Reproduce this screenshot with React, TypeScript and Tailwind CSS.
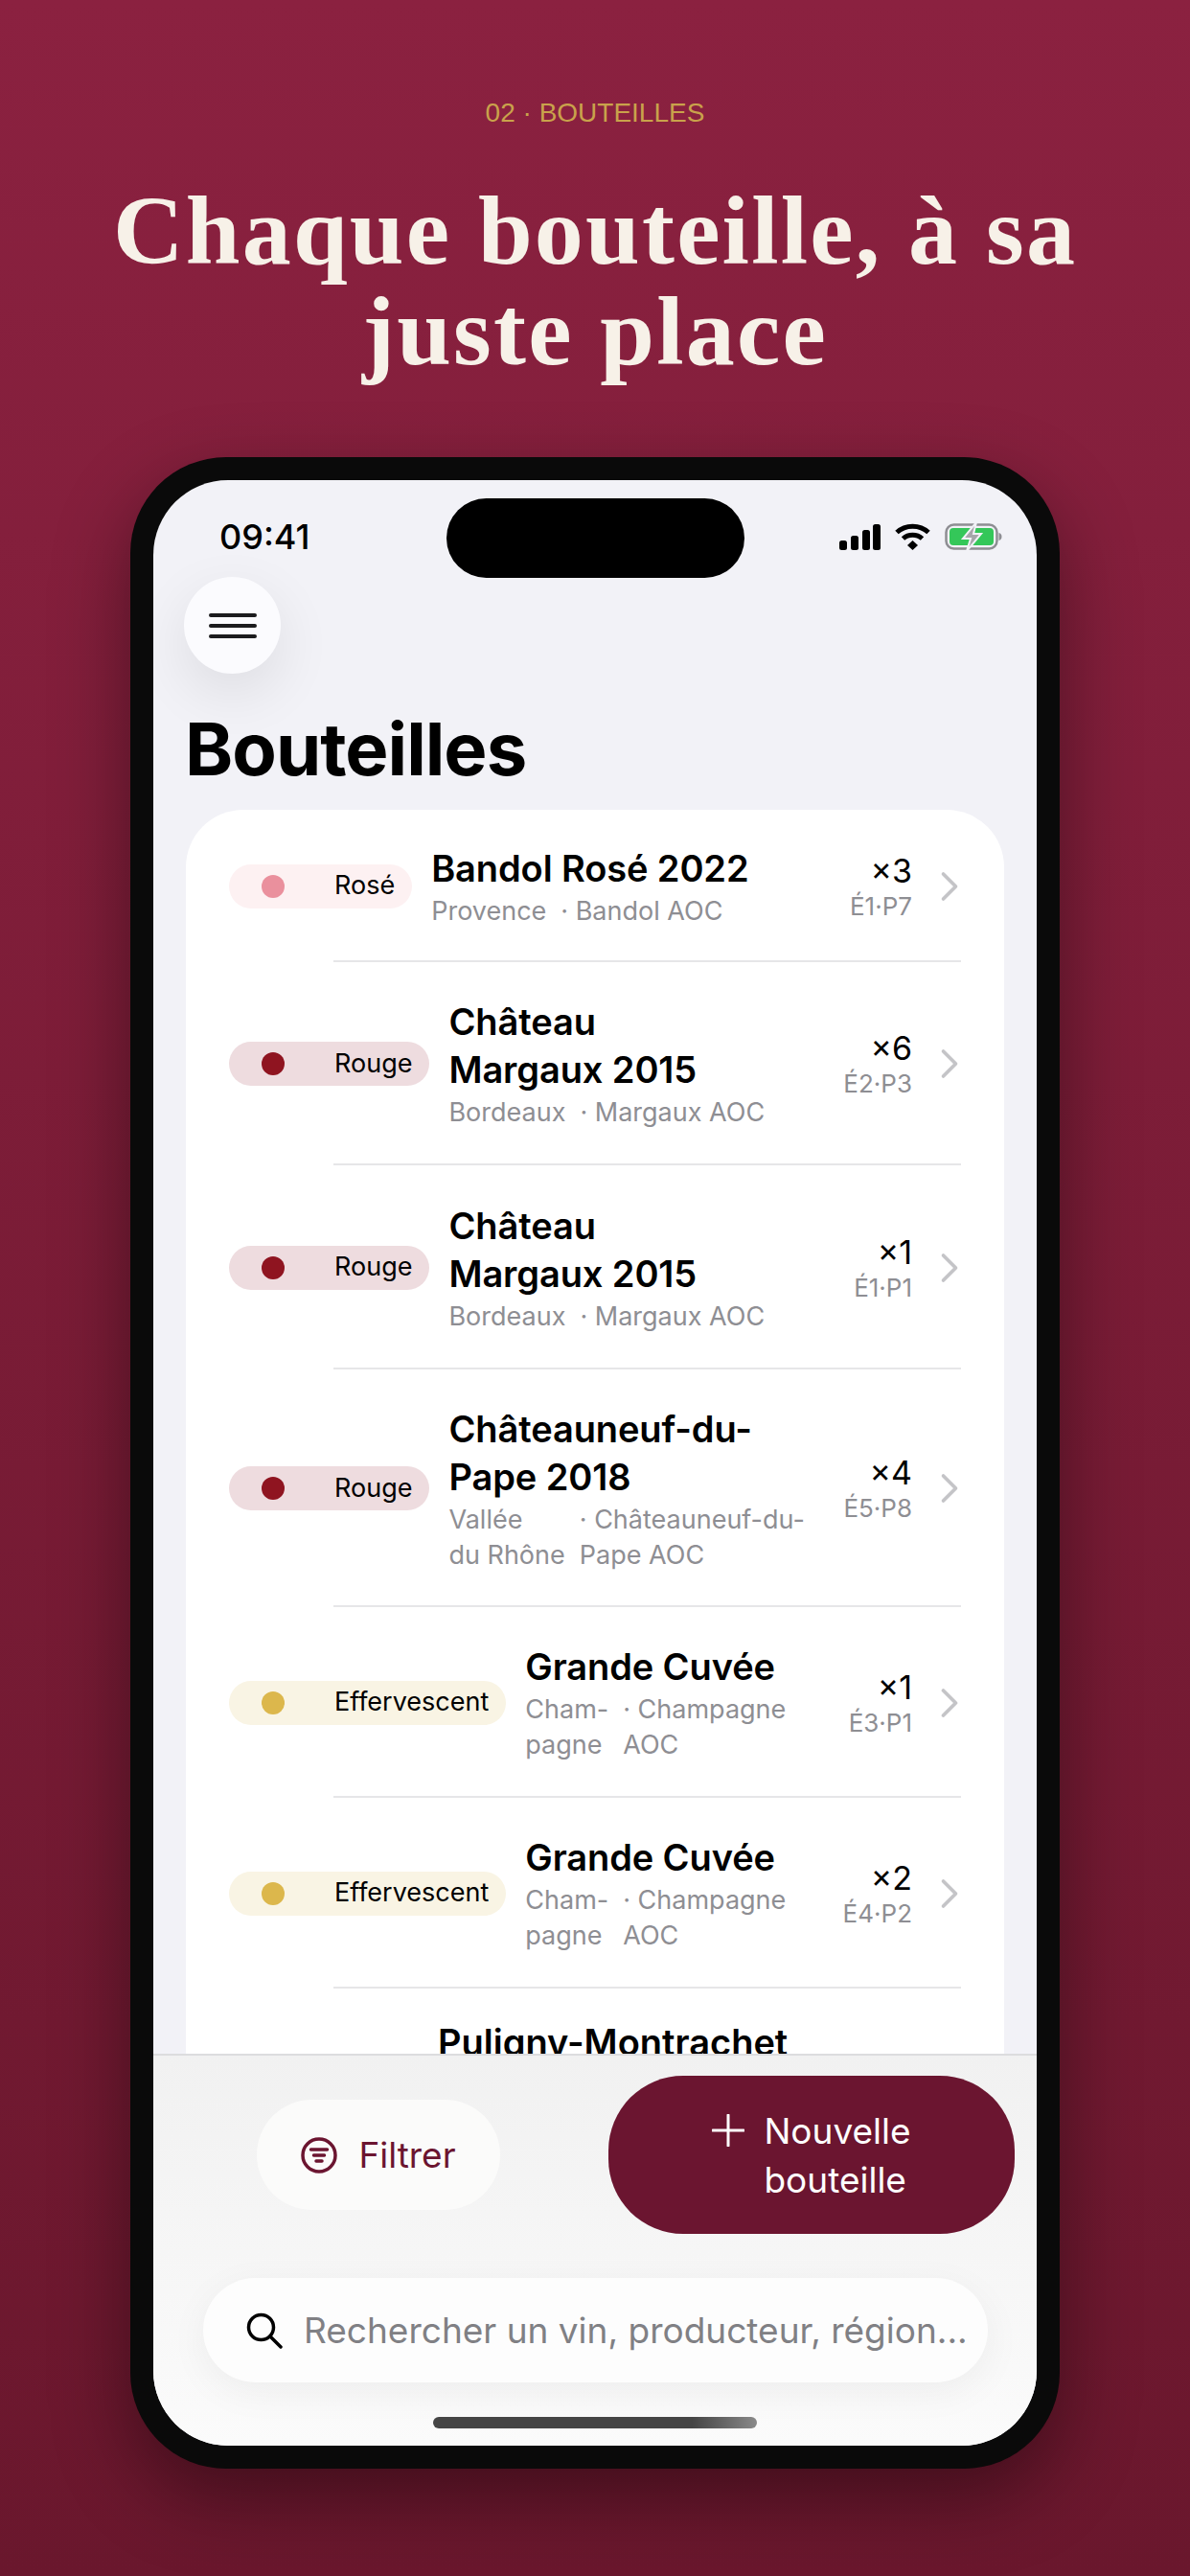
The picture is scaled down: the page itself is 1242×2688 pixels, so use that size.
import React from 'react'
import { ChevronRight } from 'lucide-react'

const pillStyles: any = {
    rose: { pill: 'bg-[#fdf1f2]', dot: 'bg-[#ea909d]', label: 'Rosé' },
    rouge: { pill: 'bg-[#eedcdf]', dot: 'bg-[#8f1420]', label: 'Rouge' },
    bulles: { pill: 'bg-[#f9f4e4]', dot: 'bg-[#dcb74c]', label: 'Effervescent' },
}

const bottles = [
    { type: 'rose', name: 'Bandol Rosé 2022', region: 'Provence', aoc: '· Bandol AOC', qty: '×3', loc: 'É1·P7', h: 'h-[159px]' },
    { type: 'rouge', name: 'Château\nMargaux 2015', region: 'Bordeaux', aoc: '· Margaux AOC', qty: '×6', loc: 'É2·P3', h: 'h-[212px]' },
    { type: 'rouge', name: 'Château\nMargaux 2015', region: 'Bordeaux', aoc: '· Margaux AOC', qty: '×1', loc: 'É1·P1', h: 'h-[213px]' },
    { type: 'rouge', name: 'Châteauneuf-du-\nPape 2018', region: 'Vallée\ndu Rhône', aoc: '· Châteauneuf-du-\nPape AOC', qty: '×4', loc: 'É5·P8', h: 'h-[248px]' },
    { type: 'bulles', name: 'Grande Cuvée', region: 'Cham-\npagne', aoc: '· Champagne\nAOC', qty: '×1', loc: 'É3·P1', h: 'h-[199px]' },
    { type: 'bulles', name: 'Grande Cuvée', region: 'Cham-\npagne', aoc: '· Champagne\nAOC', qty: '×2', loc: 'É4·P2', h: 'h-[199px]' },
]

function StatusIcons() {
    return (
        <div className="flex items-center gap-[15px]">
            <svg width="43" height="27" viewBox="0 0 43 27" fill="#000">
                <rect x="0" y="17" width="8" height="10" rx="2.5" />
                <rect x="12" y="12" width="8" height="15" rx="2.5" />
                <rect x="24" y="6" width="8" height="21" rx="2.5" />
                <rect x="35" y="0" width="8" height="27" rx="2.5" />
            </svg>
            <svg width="37" height="28" viewBox="0 0 37 28" fill="none" stroke="#000" strokeWidth="5">
                <path d="M2 9.5C11 1 26 1 35 9.5" />
                <path d="M8.5 16C14 11 23 11 28.5 16" />
                <path d="M13 23l5.5-5 5.500 5-5.500 5z" fill="#000" stroke="none" />
            </svg>
            <svg width="60" height="30" viewBox="0 0 60 30" fill="none">
                <rect x="1.500" y="2.500" width="53" height="25" rx="8" stroke="#8e8e93" strokeWidth="2.500" />
                <rect x="5" y="6" width="46" height="18" rx="4" fill="#34c759" />
                <path d="M56.500 11c2 .5 3 2 3 4s-1 3.500-3 4z" fill="#8e8e93" />
                <path d="M33 0L19 17h8L23 30l15-18h-8z" fill="#a6a6aa" stroke="#f2f2f7" strokeWidth="2" />
            </svg>
        </div>
    )
}

function BottleRow({ b }: { b: any }) {
    const style = pillStyles[b.type]
    return (
        <div className={`relative flex items-center pl-[45px] pr-[48px] ${b.h}`}>
            <div className={`flex items-center shrink-0 h-[46px] rounded-full pl-[34px] pr-[18px] ${style.pill}`}>
                <span className={`w-[24px] h-[24px] rounded-full mr-[52px] ${style.dot}`}></span>
                <span className="text-[27px] text-black">{style.label}</span>
            </div>
            <div className="flex-1 min-w-0 ml-[20px]">
                <div className="text-[38px] leading-[50px] font-semibold text-black tracking-[-0.1px] whitespace-pre-line">{b.name}</div>
                <div className="flex gap-[15px] text-[27px] leading-[37px] text-[#8e8e93] whitespace-pre-line mt-[1px]">
                    <span>{b.region}</span>
                    <span>{b.aoc}</span>
                </div>
            </div>
            <div className="flex flex-col items-end shrink-0 ml-[20px]">
                <span className="text-[34px] leading-[42px] text-black">{b.qty}</span>
                <span className="text-[26px] leading-[32px] text-[#8e8e93]">{b.loc}</span>
            </div>
            <ChevronRight className="shrink-0 w-[52px] h-[52px] ml-[13px] -mr-[17px] text-[#c4c4c7]" strokeWidth={1.7} />
            <div className="absolute left-[154px] right-[45px] bottom-0 h-[2px] bg-[#e6e6e8]"></div>
        </div>
    )
}

export default function App() {
    return (
        <div className="w-[1242px] h-[2688px] overflow-hidden flex flex-col items-center bg-gradient-to-b from-[#8b2140] to-[#6a172d] font-['Inter',sans-serif]">
            <div className="mt-[100px] text-[28px] leading-[36px] text-[#c9a24b] font-['Liberation_Sans',sans-serif]">02 · BOUTEILLES</div>
            <h1 className="mt-[52px] w-[1100px] text-center text-[102px] leading-[105px] tracking-[2.200px] font-bold text-[#f7f1e8] font-['Liberation_Serif',serif]">
                Chaque bouteille, à sa juste place
            </h1>

            {/* Phone */}
            <div className="mt-[79px] w-[970px] h-[2099px] shrink-0 rounded-[100px] bg-[#0a0a0a] p-[24px] shadow-[0_30px_80px_rgba(0,0,0,0.4)]">
                <div className="relative w-full h-full rounded-[78px] overflow-hidden bg-[#f2f2f7] flex flex-col">
                    <div className="absolute left-[306px] top-[19px] w-[311px] h-[83px] rounded-full bg-black"></div>

                    <div className="flex items-center justify-between shrink-0 pl-[69px] pr-[36px] pt-[34px] h-[84px]">
                        <span className="text-[36px] font-medium text-black">09:41</span>
                        <StatusIcons />
                    </div>

                    <div className="ml-[32px] mt-[17px] w-[101px] h-[101px] shrink-0 rounded-full bg-[#fbfbfe] flex flex-col items-center justify-center gap-[7px] shadow-[0_20px_60px_rgba(0,0,0,0.09)]">
                        <span className="w-[50px] h-[4px] rounded-full bg-[#1c1c1e]"></span>
                        <span className="w-[50px] h-[4px] rounded-full bg-[#1c1c1e]"></span>
                        <span className="w-[50px] h-[4px] rounded-full bg-[#1c1c1e]"></span>
                    </div>

                    <h2 className="ml-[33px] mt-[32px] text-[76px] leading-[92px] font-bold text-black tracking-[-1px] shrink-0">Bouteilles</h2>

                    <div className="flex-1 min-h-0 overflow-hidden px-[34px] mt-[18px]">
                        <div className="bg-white rounded-t-[60px] h-[1500px]">
                            {bottles.map((b, i) => (
                                <BottleRow key={i} b={b} />
                            ))}
                            <div className="pl-[263px] pt-[31px] text-[38px] leading-[50px] font-semibold text-black">Puligny-Montrachet</div>
                        </div>
                    </div>

                    {/* Bottom bar */}
                    <div className="relative shrink-0 h-[409px] border-t-[2px] border-[#dcdcde] bg-gradient-to-b from-[#f1f1f1] to-[#fbfbfb]">
                        <div className="flex items-center pl-[108px] gap-[113px] pt-[21px]">
                            <button className="flex items-center justify-center gap-[22px] w-[254px] h-[115px] rounded-full bg-[#fbfbfa] text-[37px] text-[#6b1530]">
                                <svg width="38" height="38" viewBox="0 0 38 38" fill="none" stroke="#6b1530" strokeWidth="3.500" strokeLinecap="round">
                                    <circle cx="19" cy="19" r="17" />
                                    <path d="M10.500 13h17M13.500 19h11M16 25h6" />
                                </svg>
                                Filtrer
                            </button>
                            <button className="flex items-start justify-center gap-[20px] w-[424px] h-[165px] rounded-[78px] bg-[#6b1530] pt-[32px] text-[37px] leading-[51px] text-white text-left">
                                <svg className="mt-[8px]" width="34" height="34" viewBox="0 0 34 34" fill="none" stroke="#fff" strokeWidth="3" strokeLinecap="round">
                                    <path d="M17 1v32M1 17h32" />
                                </svg>
                                <span>Nouvelle<br />bouteille</span>
                            </button>
                        </div>
                        <div className="ml-[52px] mt-[46px] w-[819px] h-[109px] rounded-full bg-[#fdfdfd] flex items-center pl-[45px] gap-[22px] shadow-[0_10px_40px_rgba(0,0,0,0.05)]">
                            <svg width="38" height="38" viewBox="0 0 38 38" fill="none" stroke="#000" strokeWidth="3.500" strokeLinecap="round">
                                <circle cx="15.500" cy="15.500" r="13" />
                                <path d="M25 25l11 11" />
                            </svg>
                            <span className="text-[37px] text-[#808084] whitespace-nowrap">Rechercher un vin, producteur, région...</span>
                        </div>
                        <div className="absolute left-[292px] bottom-[18px] w-[338px] h-[12px] rounded-full bg-gradient-to-r from-[#454545] via-[#454545] via-80% to-[#8a8a8a]"></div>
                    </div>
                </div>
            </div>
        </div>
    )
}
